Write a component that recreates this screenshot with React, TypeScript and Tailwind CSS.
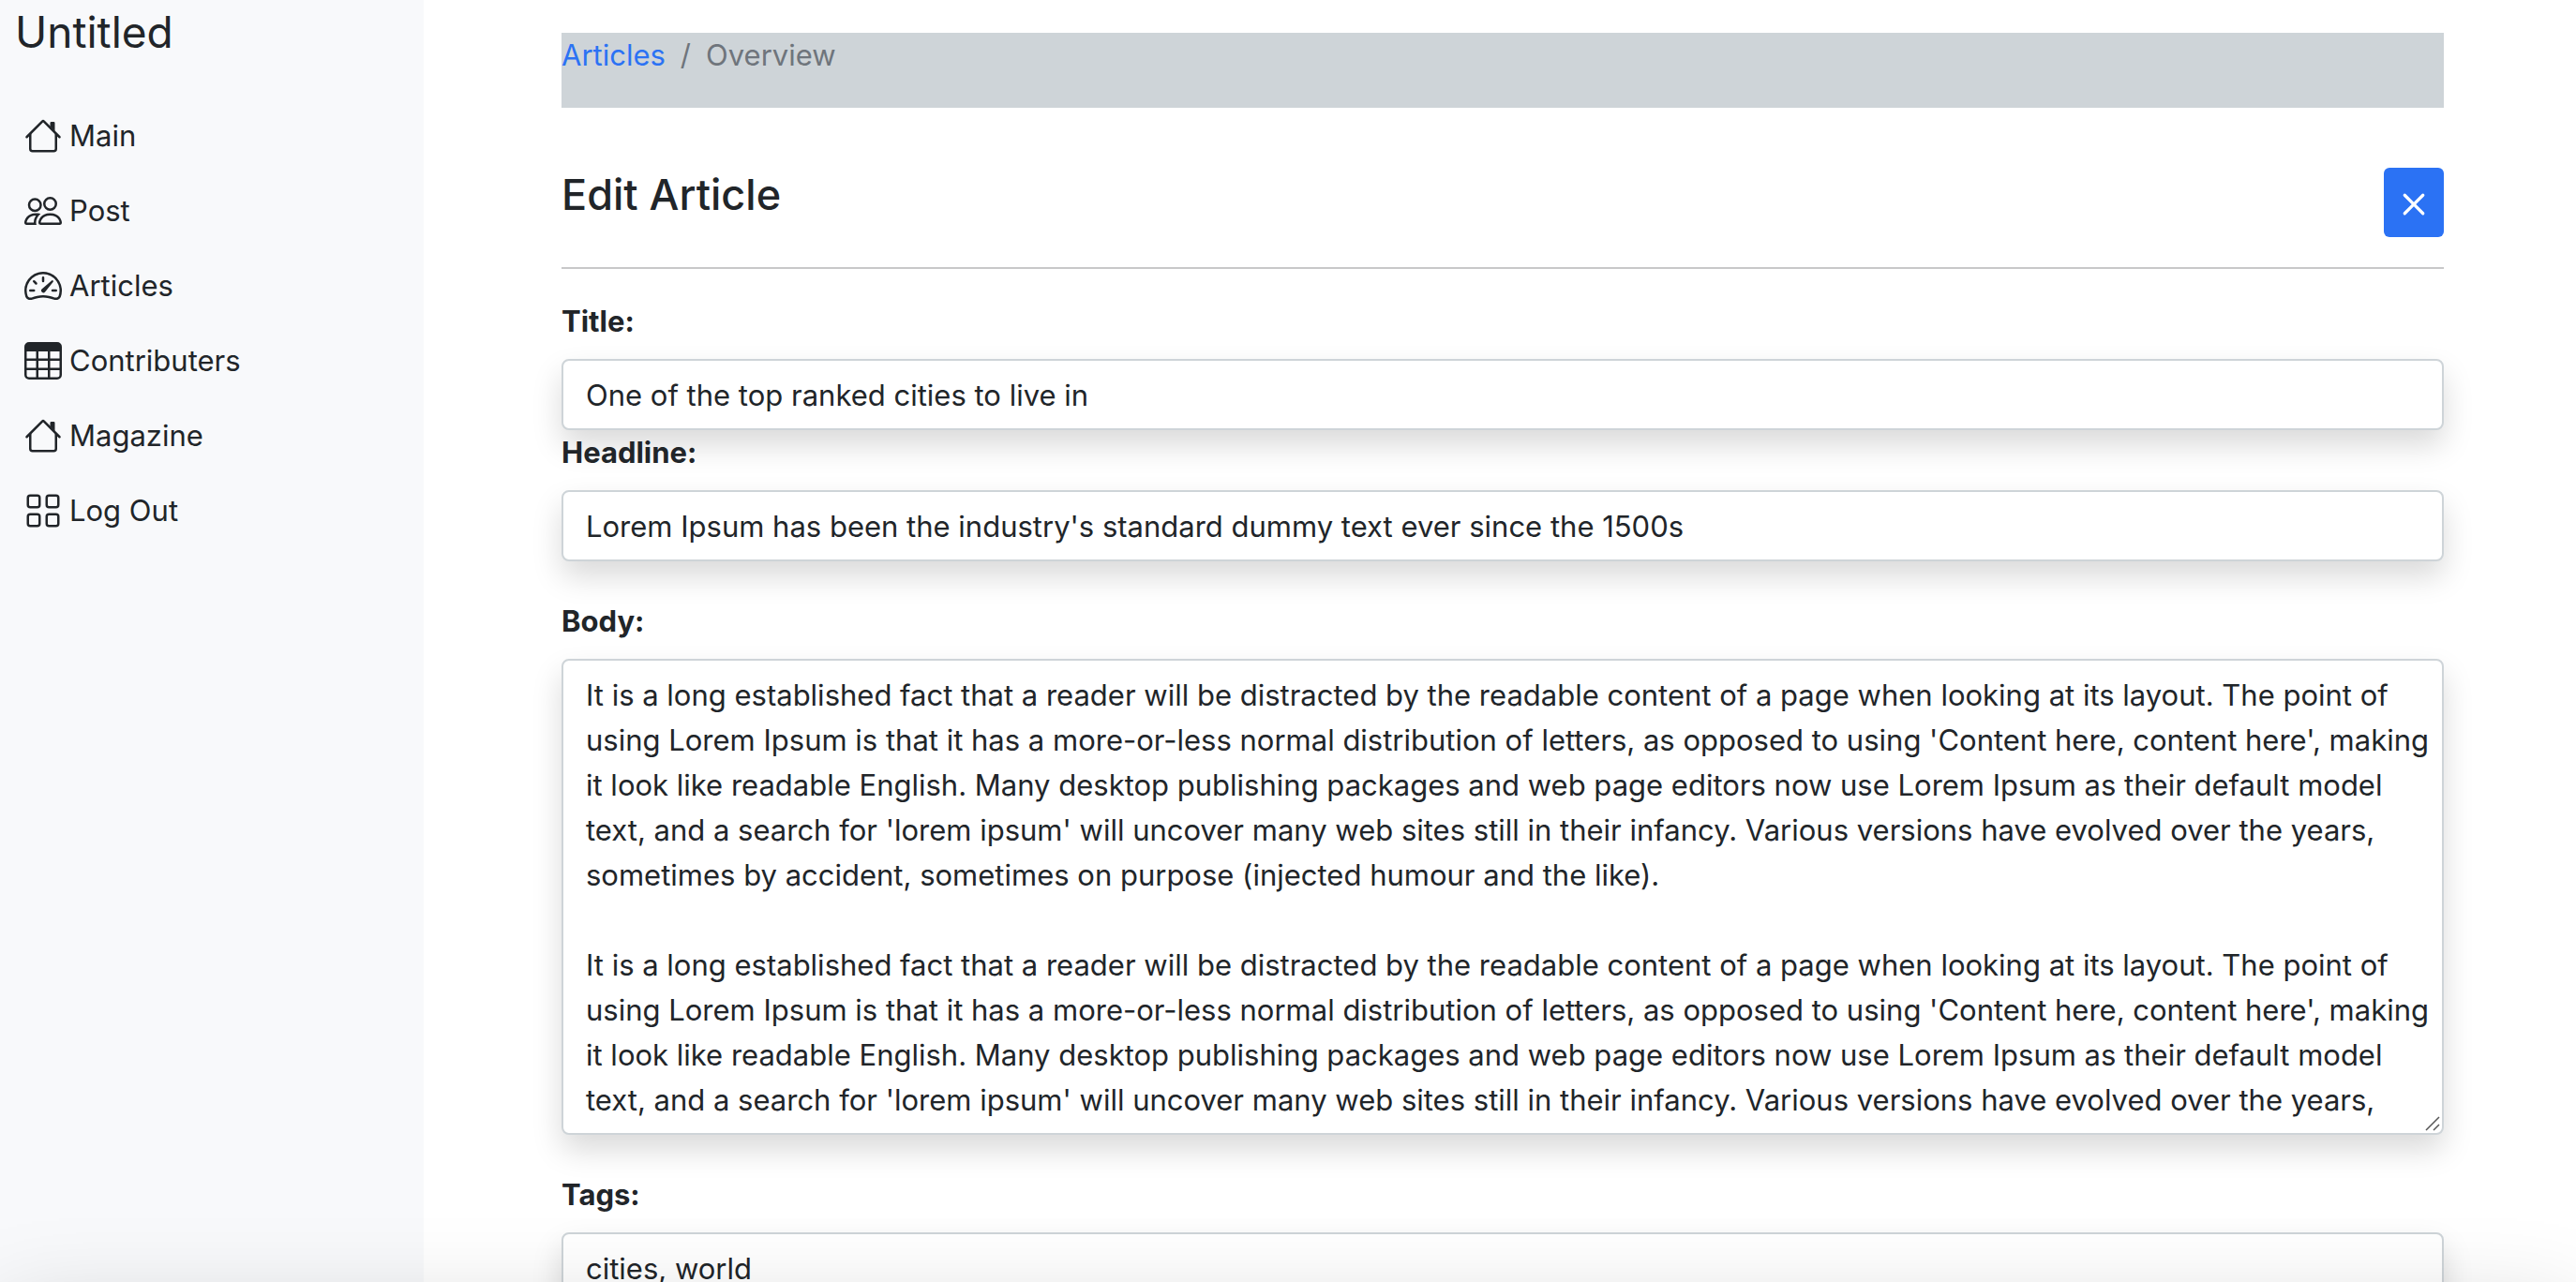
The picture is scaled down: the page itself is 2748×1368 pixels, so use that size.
import React from "react";
import { BsGrid, BsSpeedometer2, BsTable, BsX } from "react-icons/bs";

type IconProps = { className?: string };

function HouseIcon({ className }: IconProps) {
  return (
    <svg viewBox="0 0 16 16" fill="currentColor" className={className} aria-hidden="true">
      <path fillRule="evenodd" d="M2 13.5V7h1v6.5a.5.5 0 0 0 .5.5h9a.5.5 0 0 0 .5-.5V7h1v6.5a1.5 1.5 0 0 1-1.5 1.5h-9A1.5 1.5 0 0 1 2 13.5zm11-11V6l-2-2V2.5a.5.5 0 0 1 .5-.5h1a.5.5 0 0 1 .5.5z" />
      <path fillRule="evenodd" d="M7.293 1.5a1 1 0 0 1 1.414 0l6.647 6.646a.5.5 0 0 1-.708.708L8 2.207 1.354 8.854a.5.5 0 1 1-.708-.708L7.293 1.5z" />
    </svg>
  );
}

function PeopleIcon({ className }: IconProps) {
  return (
    <svg viewBox="0 0 16 16" fill="currentColor" className={className} aria-hidden="true">
      <path d="M15 14s1 0 1-1-1-4-5-4-5 3-5 4 1 1 1 1h8zm-7.978-1A.261.261 0 0 1 7 12.996c.001-.264.167-1.03.76-1.72C8.312 10.629 9.282 10 11 10c1.717 0 2.687.63 3.24 1.276.593.69.758 1.457.76 1.72l-.008.002a.274.274 0 0 1-.014.002H7.022zM11 7a2 2 0 1 0 0-4 2 2 0 0 0 0 4zm3-2a3 3 0 1 1-6 0 3 3 0 0 1 6 0zM6.936 9.28a5.88 5.88 0 0 0-1.23-.247A7.35 7.35 0 0 0 5 9c-4 0-5 3-5 4 0 .667.333 1 1 1h4.216A2.238 2.238 0 0 1 5 13c0-1.01.377-2.042 1.09-2.904.243-.294.526-.569.846-.816zM4.92 10A5.493 5.493 0 0 0 4 13H1c0-.26.164-1.03.76-1.724.545-.636 1.492-1.256 3.16-1.275zM1.5 5.5a3 3 0 1 1 6 0 3 3 0 0 1-6 0zm3-2a2 2 0 1 0 0 4 2 2 0 0 0 0-4z" />
    </svg>
  );
}

const navItems: { label: string; Icon: React.ComponentType<IconProps> }[] = [
  { label: "Main", Icon: HouseIcon },
  { label: "Post", Icon: PeopleIcon },
  { label: "Articles", Icon: BsSpeedometer2 },
  { label: "Contributers", Icon: BsTable },
  { label: "Magazine", Icon: HouseIcon },
  { label: "Log Out", Icon: BsGrid },
];

const paragraph =
  "It is a long established fact that a reader will be distracted by the readable content of a page when looking at its layout. The point of using Lorem Ipsum is that it has a more-or-less normal distribution of letters, as opposed to using 'Content here, content here', making it look like readable English. Many desktop publishing packages and web page editors now use Lorem Ipsum as their default model text, and a search for 'lorem ipsum' will uncover many web sites still in their infancy. Various versions have evolved over the years, sometimes by accident, sometimes on purpose (injected humour and the like).";

const control =
  "block w-full rounded-lg border-2 border-[#ced4d8] bg-white pl-6 shadow-[0_16px_32px_rgba(0,0,0,0.15)] outline-none";

function TextField({ id, label, value }: { id: string; label: string; value: string }) {
  return (
    <div>
      <label htmlFor={id} className="mb-4 block font-bold">
        {label}
      </label>
      <input id={id} type="text" defaultValue={value} className={`${control} h-[76px] pr-6`} />
    </div>
  );
}

export default function App() {
  return (
    <div className="relative flex h-screen overflow-hidden bg-white font-['Inter',sans-serif] text-[31px] leading-[48px] text-[#212529]">
      <aside className="w-[452px] shrink-0 bg-[#f8f9fb]">
        <p className="pl-4 text-[46px] leading-[68px]">Untitled</p>
        <nav className="mt-[37px]">
          <ul>
            {navItems.map(({ label, Icon }) => (
              <li key={label}>
                <a href="#" className="flex h-20 items-center gap-2 pl-[26px]">
                  <Icon className="size-10" />
                  {label}
                </a>
              </li>
            ))}
          </ul>
        </nav>
      </aside>

      <main className="min-w-0 flex-1 pt-[35px] pr-[141px] pl-[147px]">
        <nav aria-label="breadcrumb" className="h-20 bg-[#ced4d8]">
          <ol className="flex gap-4 text-[#6f757c]">
            <li>
              <a href="#" className="text-[#2b72f4]">
                Articles
              </a>
            </li>
            <li aria-hidden="true">/</li>
            <li aria-current="page">Overview</li>
          </ol>
        </nav>

        <header className="mt-16 flex items-start justify-between border-b-2 border-[#c8c8c9] pb-8">
          <h1 className="text-[45px] leading-[58px] font-medium">Edit Article</h1>
          <button
            type="button"
            aria-label="Close"
            className="flex h-[74px] w-16 items-center justify-center rounded-md bg-[#2b72f4] pt-1 text-white"
          >
            <BsX className="size-13 shrink-0" />
          </button>
        </header>

        <form className="pt-8">
          <TextField id="title" label="Title:" value="One of the top ranked cities to live in" />
          <TextField
            id="headline"
            label="Headline:"
            value="Lorem Ipsum has been the industry's standard dummy text ever since the 1500s"
          />
          <div className="mt-10">
            <label htmlFor="body" className="mb-4 block font-bold">
              Body:
            </label>
            <div className="relative">
              <textarea
                id="body"
                defaultValue={`${paragraph}\n\n${paragraph}`}
                className={`${control} h-[508px] resize-none overflow-hidden pt-[13px] pr-1`}
              />
              <svg
                viewBox="0 0 16 16"
                className="pointer-events-none absolute right-1 bottom-1 size-4 text-[#555555]"
                stroke="currentColor"
                strokeWidth="1.5"
                aria-hidden="true"
              >
                <path d="M1 15 15 1M9 15l6-6" />
              </svg>
            </div>
          </div>
          <div className="mt-10">
            <TextField id="tags" label="Tags:" value="cities, world" />
          </div>
        </form>
      </main>

      <div className="pointer-events-none absolute inset-x-0 top-full h-96 shadow-[0_32px_96px_rgba(0,0,0,0.175)]" />
    </div>
  );
}
